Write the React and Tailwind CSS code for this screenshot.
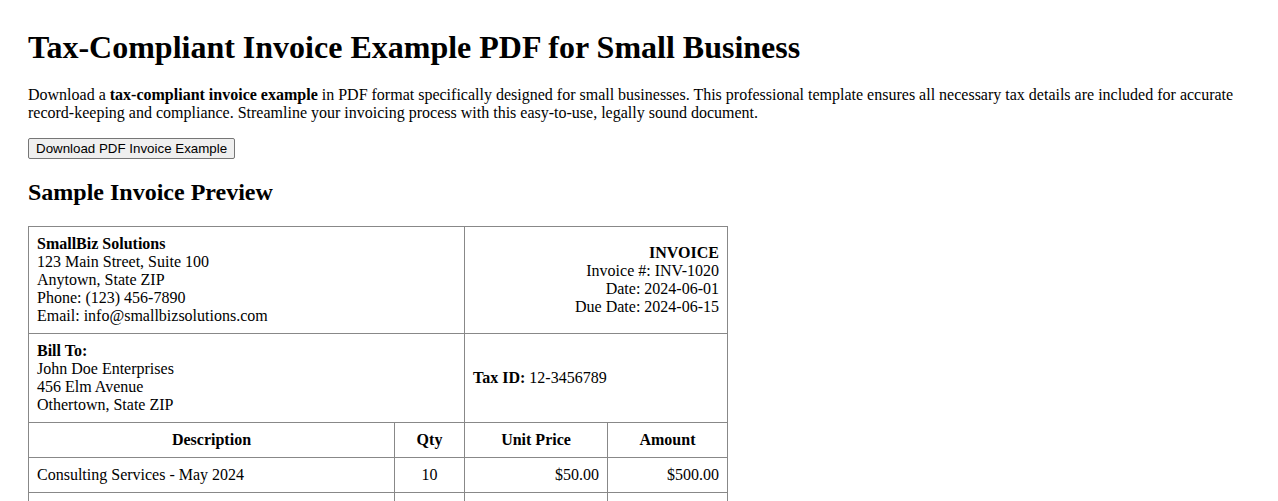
export default function App() {
  const cell = 'border border-[#888] p-[8px] align-middle';

  return (
    <div className="bg-white text-black p-[8px] font-['Liberation_Serif','Times_New_Roman',serif] text-[16px] leading-[normal]">
      <div className="px-[20px]">
        {/* Heading */}
        <h1 className="text-[32px] font-bold leading-[normal] mt-[21.44px] mb-[19.5px]">
          Tax-Compliant Invoice Example PDF for Small Business
        </h1>

        <p className="my-[16px]">
          Download a <strong>tax-compliant invoice example</strong> in PDF format specifically designed for small
          businesses. This professional template ensures all necessary tax details are included for accurate
          record-keeping and compliance. Streamline your invoicing process with this easy-to-use, legally sound
          document.
        </p>

        <button className="block h-[21px] px-[7px] border border-[#767676] rounded-[2px] bg-[#efefef] font-['Liberation_Sans',Arial,sans-serif] text-[13.33px] leading-[normal] text-black">
          Download PDF Invoice Example
        </button>

        <h2 className="text-[24px] font-bold leading-[normal] my-[19.92px]">Sample Invoice Preview</h2>

        {/* Invoice preview */}
        <table className="w-[699px] table-fixed border-collapse">
          <colgroup>
            <col className="w-[366px]" />
            <col className="w-[70px]" />
            <col className="w-[143px]" />
            <col className="w-[120px]" />
          </colgroup>
          <tbody>
            <tr>
              <td colSpan={2} className={cell}>
                <strong>SmallBiz Solutions</strong>
                <br />
                123 Main Street, Suite 100
                <br />
                Anytown, State ZIP
                <br />
                Phone: (123) 456-7890
                <br />
                Email: info@smallbizsolutions.com
              </td>
              <td colSpan={2} className={`${cell} text-right`}>
                <strong>INVOICE</strong>
                <br />
                Invoice #: INV-1020
                <br />
                Date: 2024-06-01
                <br />
                Due Date: 2024-06-15
              </td>
            </tr>
            <tr>
              <td colSpan={2} className={cell}>
                <strong>Bill To:</strong>
                <br />
                John Doe Enterprises
                <br />
                456 Elm Avenue
                <br />
                Othertown, State ZIP
              </td>
              <td colSpan={2} className={cell}>
                <strong>Tax ID:</strong> 12-3456789
              </td>
            </tr>
            <tr>
              <th className={`${cell} text-center font-bold`}>Description</th>
              <th className={`${cell} text-center font-bold`}>Qty</th>
              <th className={`${cell} text-center font-bold`}>Unit Price</th>
              <th className={`${cell} text-center font-bold`}>Amount</th>
            </tr>
            <tr>
              <td className={cell}>Consulting Services - May 2024</td>
              <td className={`${cell} text-center`}>10</td>
              <td className={`${cell} text-right`}>$50.00</td>
              <td className={`${cell} text-right`}>$500.00</td>
            </tr>
            <tr>
              <td className={cell}>Website Maintenance</td>
              <td className={`${cell} text-center`}>1</td>
              <td className={`${cell} text-right`}>$150.00</td>
              <td className={`${cell} text-right`}>$150.00</td>
            </tr>
            <tr>
              <td colSpan={3} className={`${cell} text-right`}>Subtotal</td>
              <td className={`${cell} text-right`}>$650.00</td>
            </tr>
            <tr>
              <td colSpan={3} className={`${cell} text-right`}>Sales Tax (8%)</td>
              <td className={`${cell} text-right`}>$52.00</td>
            </tr>
            <tr>
              <td colSpan={3} className={`${cell} text-right font-bold`}>Total Due</td>
              <td className={`${cell} text-right font-bold`}>$702.00</td>
            </tr>
          </tbody>
        </table>
      </div>
    </div>
  );
}
